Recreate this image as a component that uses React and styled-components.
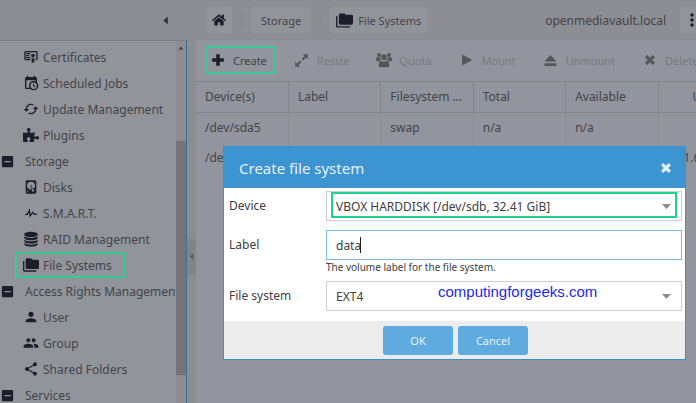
import styled, { createGlobalStyle } from "styled-components";
import { FaHome, FaPuzzlePiece } from "react-icons/fa";
import {
  MdCached,
  MdPerson,
  MdPeople,
  MdShare,
  MdIndeterminateCheckBox,
  MdMoreVert,
} from "react-icons/md";

const GlobalStyle = createGlobalStyle`
  * {
    box-sizing: border-box;
  }

  body {
    margin: 0;
    overflow: hidden;
    background-color: #92959c;
    color: #424449;
    font-family: "Noto Sans", "Open Sans", sans-serif;
    font-size: 12px;
  }

  button, input, select {
    font-family: inherit;
    color: inherit;
  }
`;

const StyledApp = styled.div`
  position: relative;
  display: flex;
  flex-direction: column;
  height: 100vh;
  overflow: hidden;
`;

const Header = styled.header`
  display: flex;
  align-items: center;
  height: 40px;
  flex-shrink: 0;
  background-color: #8c8e93;
`;

const HeaderSide = styled.div`
  display: flex;
  justify-content: flex-end;
  width: 196px;
  padding-right: 22px;
`;

const CollapseButton = styled.button`
  display: flex;
  padding: 4px;
  border: none;
  background: none;
  color: #2b2d38;
`;

const Breadcrumb = styled.nav`
  display: flex;
  align-items: center;
  flex: 1;
  padding-left: 10px;
`;

const Crumb = styled.button`
  display: flex;
  align-items: center;
  gap: 5px;
  height: 26px;
  padding: 0 ${(props) => (props.$wide ? "10px" : "6px")};
  border: none;
  border-radius: 3px;
  background-color: #92949a;
  font-size: 11px;
  color: #424449;

  svg {
    color: #1c1e29;
  }
`;

const Divider = styled.span`
  width: 1px;
  height: 14px;
  margin: 0 9px;
  background-color: #85878c;
`;

const Host = styled.span`
  margin-right: 14px;
`;

const MenuButton = styled.button`
  display: flex;
  align-items: center;
  width: 16px;
  height: 26px;
  padding: 0 0 0 2px;
  border: none;
  background-color: #92949a;
  color: #1c1e29;

  svg {
    flex-shrink: 0;
  }
`;

const Body = styled.div`
  display: flex;
  flex: 1;
  min-height: 0;
`;

const Sidebar = styled.aside`
  display: flex;
  width: 187px;
  flex-shrink: 0;
  border-top: 1px solid #7b7e83;
  border-right: 1px solid #3c6f92;
  background-color: #92949c;
`;

const Tree = styled.ul`
  flex: 1;
  min-width: 0;
  overflow: hidden;
  margin: 0;
  padding: 3px 0 0;
  list-style: none;
`;

const TreeItem = styled.li`
  display: flex;
  align-items: center;
  height: 26px;
  padding-left: ${(props) => (props.$group ? "0" : "16px")};
`;

const TreeLink = styled.a`
  display: flex;
  align-items: center;
  gap: ${(props) => (props.$group ? "10px" : "4px")};
  height: 24px;
  padding: ${(props) => (props.$group ? "0" : "0 12px 0 7px")};
  color: inherit;
  white-space: nowrap;
  text-decoration: none;
  outline: ${(props) => (props.$active ? "2px solid #34cb98" : "none")};
  outline-offset: -1px;

  svg {
    flex-shrink: 0;
    color: #1c1e29;
  }
`;

const Scrollbar = styled.div`
  display: flex;
  flex-direction: column;
  align-items: center;
  width: 10px;
  padding: 4px 0 28px;
  background-color: #8c8d92;
  color: #3c3e43;
`;

const Thumb = styled.div`
  flex: 1;
  width: 100%;
  margin-top: 90px;
  background-color: #737479;
`;

const Splitter = styled.div`
  display: flex;
  align-items: center;
  width: 9px;
  flex-shrink: 0;
  padding-top: 70px;
  background-color: #8b8d93;
`;

const SplitHandle = styled.span`
  display: flex;
  align-items: center;
  justify-content: center;
  width: 100%;
  height: 36px;
  background-color: #828489;
  color: #55575c;
`;

const Content = styled.main`
  flex: 1;
  min-width: 0;
  overflow: hidden;
  background-color: #92959d;
`;

const Toolbar = styled.div`
  display: flex;
  align-items: flex-start;
  gap: 15px;
  height: 42px;
  padding: 6px 0 0 10px;
  border-bottom: 1px solid #84868c;
`;

const ToolButton = styled.button`
  display: flex;
  align-items: center;
  flex-shrink: 0;
  gap: 7px;
  height: 28px;
  padding: 0 8px 0 4px;
  border: none;
  background: none;
  font-size: 11px;
  color: #424449;
  outline: ${(props) => (props.$active ? "2px solid #34cb98" : "none")};
  outline-offset: -2px;

  &:disabled {
    color: #777980;
  }
`;

const ToolIcon = styled.span`
  display: flex;
  justify-content: center;
  width: 16px;
  color: ${(props) => (props.$disabled ? "#54565c" : "#1c1e29")};
`;

const Table = styled.table`
  width: 555px;
  table-layout: fixed;
  border-collapse: collapse;
  text-align: left;
`;

const Th = styled.th`
  height: 30px;
  padding: 0 9px;
  overflow: hidden;
  border-right: 1px solid #84868c;
  border-bottom: 1px solid #84868c;
  font-weight: 400;
  padding-left: ${(props) => (props.$right ? "14px" : "9px")};
  text-align: ${(props) => (props.$right ? "center" : "left")};
  text-overflow: ellipsis;
  white-space: nowrap;
`;

const Td = styled.td`
  height: 30px;
  padding: 0 9px;
  border-right: 1px solid #8a8c92;
  padding-left: ${(props) => (props.$right ? "14px" : "9px")};
  text-align: ${(props) => (props.$right ? "center" : "left")};
`;

const Dialog = styled.section`
  position: absolute;
  top: 146px;
  left: 223px;
  right: 10px;
  border: 1px solid #3892d0;
  background-color: #ffffff;
  color: #404040;
`;

const DialogHeader = styled.header`
  display: flex;
  align-items: center;
  justify-content: space-between;
  height: 41px;
  padding: 0 13px 0 15px;
  background-color: #3c94d0;
  color: #e6f1fa;
`;

const DialogTitle = styled.h1`
  margin: 0;
  font-size: 15px;
  font-weight: 400;
`;

const CloseButton = styled.button`
  display: flex;
  padding: 0;
  border: none;
  background: none;
  color: #e6f1fa;
`;

const Form = styled.form`
  margin: 0;
`;

const Fields = styled.div`
  display: flex;
  flex-direction: column;
  padding: 3px 3px 10px 5px;
`;

const Field = styled.div`
  display: grid;
  grid-template-columns: 97px 1fr;
  align-items: start;
  min-height: ${(props) => (props.$last ? "30px" : "39px")};
`;

const Label = styled.label`
  line-height: 30px;
`;

const Control = styled.div`
  position: relative;
`;

const Select = styled.select`
  display: block;
  width: 100%;
  height: 30px;
  padding: 0 9px;
  border: 1px solid #d0d0d0;
  border-radius: 0;
  appearance: none;
  background-color: #ffffff;
  font-size: 12px;
`;

const Input = styled.input`
  display: block;
  width: 100%;
  height: 30px;
  padding: 0 9px;
  border: 1px solid #7fb8e0;
  font-size: 12px;
  outline: none;
`;

const Arrow = styled.svg`
  position: absolute;
  top: 13px;
  right: 11px;
  pointer-events: none;
`;

const Highlight = styled.span`
  position: absolute;
  inset: 1px 5px 3px 5px;
  border: 2px solid #1fd38e;
  pointer-events: none;
`;

const Caret = styled.span`
  position: absolute;
  top: 7px;
  left: 34px;
  width: 1px;
  height: 16px;
  background-color: #202020;
`;

const Hint = styled.p`
  margin: 0;
  padding-bottom: 7px;
  font-size: 10px;
  line-height: 14px;
`;

const Watermark = styled.span`
  position: absolute;
  top: 2px;
  left: 112px;
  font-family: "Liberation Sans", Arial, sans-serif;
  font-size: 15px;
  line-height: 18px;
  color: #2229ea;
  pointer-events: none;
`;

const DialogFooter = styled.footer`
  display: flex;
  justify-content: center;
  gap: 5px;
  padding: 5px 3px 4px 5px;
  background-color: #ececec;
`;

const Button = styled.button`
  width: 70px;
  height: 29px;
  padding: 0;
  border: none;
  border-radius: 3px;
  background-color: #5fabdf;
  color: #e4f2fb;
  font-size: 11px;
`;

const paths = {
  certificate:
    "M13 21L15 20L17 21V14H13M17 9V7L15 8L13 7V9L11 10L13 11V13L15 12L17 13V11L19 10M20 3H4A2 2 0 0 0 2 5V15A2 2 0 0 0 4 17H11V15H4V5H20V15H19V17H20A2 2 0 0 0 22 15V5A2 2 0 0 0 20 3M11 8H5V6H11M9 11H5V9H9M11 14H5V12H11Z",
  calendar:
    "M15,13H16.5V15.82L18.94,17.23L18.19,18.53L15,16.69V13M19,8H5V19H9.67C9.24,18.09 9,17.07 9,16A7,7 0 0,1 16,9C17.07,9 18.09,9.24 19,9.67V8M5,21C3.89,21 3,20.1 3,19V5C3,3.89 3.89,3 5,3H6V1H8V3H16V1H18V3H19A2,2 0 0,1 21,5V11.1C22.24,12.36 23,14.09 23,16A7,7 0 0,1 16,23C14.09,23 12.36,22.24 11.1,21H5M16,11.15A4.85,4.85 0 0,0 11.15,16C11.15,18.68 13.32,20.85 16,20.85A4.85,4.85 0 0,0 20.85,16C20.85,13.32 18.68,11.15 16,11.15Z",
  harddisk:
    "M6,2H18A2,2 0 0,1 20,4V20A2,2 0 0,1 18,22H6A2,2 0 0,1 4,20V4A2,2 0 0,1 6,2M12,4A6,6 0 0,0 6,10C6,13.31 8.69,16 12.1,16L11.22,13.77C10.95,13.29 11.11,12.68 11.59,12.4L12.45,11.9C12.93,11.63 13.54,11.79 13.82,12.27L15.74,14.69C17.12,13.59 18,11.9 18,10A6,6 0 0,0 12,4M12,9A1,1 0 0,1 13,10A1,1 0 0,1 12,11A1,1 0 0,1 11,10A1,1 0 0,1 12,9M7,18A1,1 0 0,0 6,19A1,1 0 0,0 7,20A1,1 0 0,0 8,19A1,1 0 0,0 7,18M12.09,13.27L14.58,19.58L17.17,18.08L12.95,12.77L12.09,13.27Z",
  pulse:
    "M3,13H5.79L10.1,4.79L11.28,13.75L14.5,9.66L17.83,13H21V15H17L14.67,12.67L9.92,18.73L8.94,11.31L7,15H3V13Z",
  database:
    "M2 4.500C2 2.600 6.500 1 12 1s10 1.600 10 3.500v1C22 7.400 17.500 9 12 9S2 7.400 2 5.500zM2 8c2 1.700 6 2.500 10 2.500S20 9.700 22 8v2.500c0 1.900-4.500 3.500-10 3.500S2 12.400 2 10.500zM2 13c2 1.700 6 2.500 10 2.500s8-.8 10-2.500v2.500c0 1.900-4.500 3.500-10 3.500S2 17.400 2 15.500zM2 18c2 1.700 6 2.500 10 2.500s8-.8 10-2.500v2c0 1.900-4.500 3.500-10 3.500S2 21.900 2 20z",
  folders:
    "M22,4H14L12,2H6A2,2 0 0,0 4,4V16A2,2 0 0,0 6,18H22A2,2 0 0,0 24,16V6A2,2 0 0,0 22,4M2,6H0V11H0V20A2,2 0 0,0 2,22H20V20H2V6Z",
  plus: "M9 2h6v7h7v6h-7v7H9v-7H2V9h7z",
  times: "M2 6.500L6.500 2 12 7.500 17.500 2 22 6.500 16.500 12 22 17.500 17.500 22 12 16.500 6.500 22 2 17.500 7.500 12z",
  resize:
    "M14 2h8v8l-2.800-2.800-4.700 4.700-2.400-2.400 4.700-4.700zM2 22v-8l2.800 2.800 4.700-4.700 2.400 2.400-4.700 4.700L10 22z",
  users:
    "M12 3.500a4.500 4.500 0 1 1 0 9 4.500 4.500 0 0 1 0-9zM4.500 1.500a3 3 0 1 1 0 6 3 3 0 0 1 0-6zM19.500 1.500a3 3 0 1 1 0 6 3 3 0 0 1 0-6zM1.500 8h4.700c0 2 .7 3.500 1.800 4.500-1.500 0-2.500.5-3.300 1.500H2.500C1 14 0 13.300 0 12c0-2 .3-4 1.500-4zM22.500 8h-4.700c0 2-.7 3.500-1.800 4.500 1.500 0 2.500.5 3.300 1.500h2.200c1.500 0 2.500-.7 2.500-2 0-2-.3-4-1.500-4zM8 13.500c1 .7 2.500 1.200 4 1.200s3-.5 4-1.200c3 0 4 3 4 6.500 0 2-1.300 3-3 3H7c-1.700 0-3-1-3-3 0-3.500 1-6.500 4-6.500z",
  play: "M2 1l21 11L2 23z",
  eject: "M12 2l11 12H1zM1 17h22v5H1z",
  left: "M18 2v20L6 12z",
  up: "M2 18h20L12 6z",
};

function Icon({ name, size = 16 }) {
  return (
    <svg width={size} height={size} viewBox="0 0 24 24" fill="currentColor" aria-hidden="true">
      <path d={paths[name]} />
    </svg>
  );
}

const menu = [
  { text: "Certificates", icon: <Icon name="certificate" /> },
  { text: "Scheduled Jobs", icon: <Icon name="calendar" /> },
  { text: "Update Management", icon: <MdCached size={16} /> },
  { text: "Plugins", icon: <FaPuzzlePiece size={16} /> },
  { text: "Storage", group: true },
  { text: "Disks", icon: <Icon name="harddisk" /> },
  { text: "S.M.A.R.T.", icon: <Icon name="pulse" /> },
  { text: "RAID Management", icon: <Icon name="database" /> },
  { text: "File Systems", icon: <Icon name="folders" />, active: true },
  { text: "Access Rights Management", group: true },
  { text: "User", icon: <MdPerson size={16} /> },
  { text: "Group", icon: <MdPeople size={16} /> },
  { text: "Shared Folders", icon: <MdShare size={16} /> },
  { text: "Services", group: true },
];

const actions = [
  { text: "Create", icon: <Icon name="plus" size={14} />, active: true },
  { text: "Resize", icon: <Icon name="resize" size={15} /> },
  { text: "Quota", icon: <Icon name="users" size={16} /> },
  { text: "Mount", icon: <Icon name="play" size={12} /> },
  { text: "Unmount", icon: <Icon name="eject" size={13} /> },
  { text: "Delete", icon: <Icon name="times" size={12} /> },
];

const columns = ["Device(s)", "Label", "Filesystem type", "Total", "Available", "Used"];

const rows = [
  ["/dev/sda5", "", "swap", "n/a", "n/a", ""],
  ["/dev/sda1", "", "", "", "", "1.60 GiB"],
];

function SelectArrow() {
  return (
    <Arrow width="9" height="5" viewBox="0 0 9 5" fill="#8c8c8c" aria-hidden="true">
      <path d="M0 0h9L4.500 5z" />
    </Arrow>
  );
}

function AppHeader() {
  return (
    <Header>
      <HeaderSide>
        <CollapseButton aria-label="Collapse navigation">
          <Icon name="left" size={9} />
        </CollapseButton>
      </HeaderSide>
      <Breadcrumb>
        <Crumb aria-label="Home">
          <FaHome size={14} />
        </Crumb>
        <Divider />
        <Crumb $wide>Storage</Crumb>
        <Divider />
        <Crumb>
          <Icon name="folders" size={17} />
          File Systems
        </Crumb>
      </Breadcrumb>
      <Host>openmediavault.local</Host>
      <MenuButton aria-label="Menu">
        <MdMoreVert size={20} />
      </MenuButton>
    </Header>
  );
}

function Navigation() {
  return (
    <Sidebar>
      <Tree>
        {menu.map((item) => (
          <TreeItem key={item.text} $group={item.group}>
            <TreeLink href="#" $group={item.group} $active={item.active}>
              {item.group ? <MdIndeterminateCheckBox size={15} /> : item.icon}
              {item.text}
            </TreeLink>
          </TreeItem>
        ))}
      </Tree>
      <Scrollbar>
        <Icon name="up" size={6} />
        <Thumb />
      </Scrollbar>
    </Sidebar>
  );
}

function FileSystems() {
  return (
    <Content>
      <Toolbar>
        {actions.map((action) => (
          <ToolButton key={action.text} $active={action.active} disabled={!action.active}>
            <ToolIcon $disabled={!action.active}>{action.icon}</ToolIcon>
            {action.text}
          </ToolButton>
        ))}
      </Toolbar>
      <Table>
        <thead>
          <tr>
            {columns.map((column, i) => (
              <Th key={column} $right={i === 5}>
                {column}
              </Th>
            ))}
          </tr>
        </thead>
        <tbody>
          {rows.map((row) => (
            <tr key={row[0]}>
              {row.map((cell, i) => (
                <Td key={i} $right={i === 5}>
                  {cell}
                </Td>
              ))}
            </tr>
          ))}
        </tbody>
      </Table>
    </Content>
  );
}

function CreateDialog() {
  return (
    <Dialog role="dialog" aria-labelledby="dialog-title">
      <DialogHeader>
        <DialogTitle id="dialog-title">Create file system</DialogTitle>
        <CloseButton aria-label="Close">
          <Icon name="times" size={12} />
        </CloseButton>
      </DialogHeader>
      <Form onSubmit={(e) => e.preventDefault()}>
        <Fields>
          <Field>
            <Label htmlFor="device">Device</Label>
            <Control>
              <Select id="device">
                <option>VBOX HARDDISK [/dev/sdb, 32.41 GiB]</option>
              </Select>
              <Highlight />
              <SelectArrow />
            </Control>
          </Field>
          <Field>
            <Label htmlFor="label">Label</Label>
            <Control>
              <Input id="label" type="text" defaultValue="data" />
              <Caret />
              <Hint>The volume label for the file system.</Hint>
            </Control>
          </Field>
          <Field $last>
            <Label htmlFor="fstype">File system</Label>
            <Control>
              <Select id="fstype">
                <option>EXT4</option>
              </Select>
              <Watermark>computingforgeeks.com</Watermark>
              <SelectArrow />
            </Control>
          </Field>
        </Fields>
        <DialogFooter>
          <Button type="submit">OK</Button>
          <Button type="button">Cancel</Button>
        </DialogFooter>
      </Form>
    </Dialog>
  );
}

function App() {
  return (
    <>
      <GlobalStyle />
      <StyledApp>
        <AppHeader />
        <Body>
          <Navigation />
          <Splitter>
            <SplitHandle>
              <Icon name="left" size={7} />
            </SplitHandle>
          </Splitter>
          <FileSystems />
        </Body>
        <CreateDialog />
      </StyledApp>
    </>
  );
}

export default App;
